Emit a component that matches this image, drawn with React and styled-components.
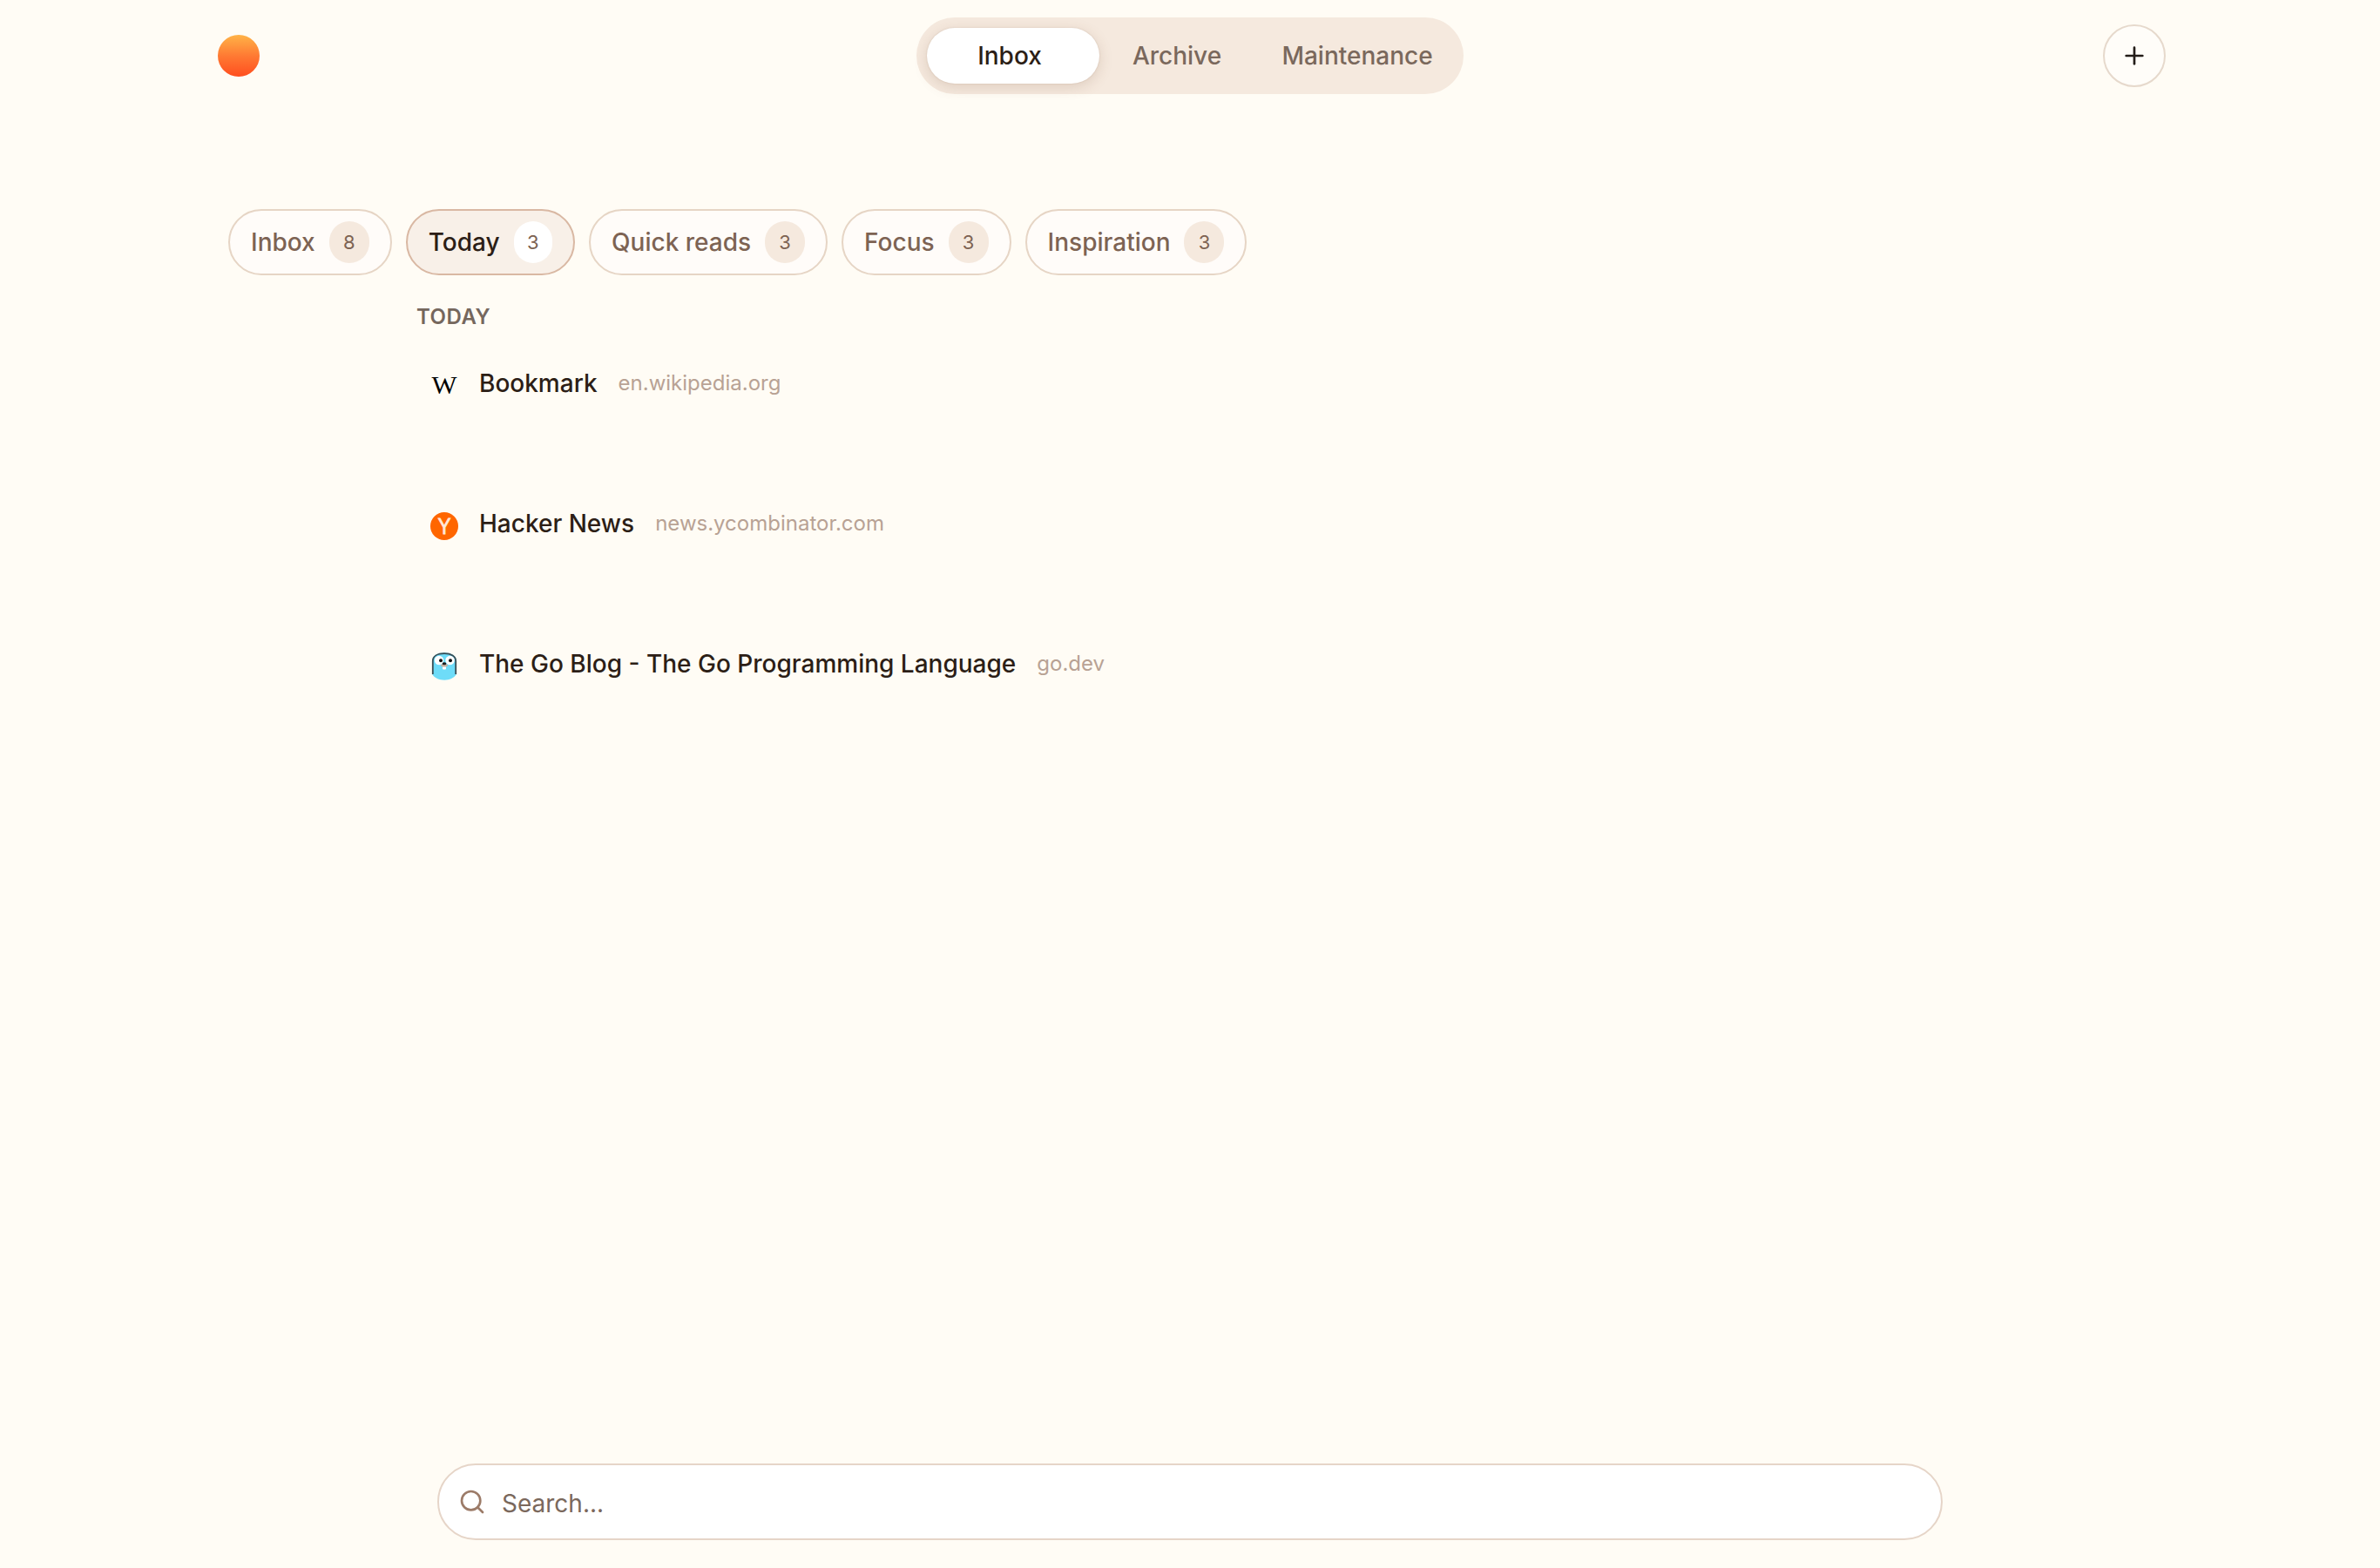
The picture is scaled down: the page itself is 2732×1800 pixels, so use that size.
import styled, { createGlobalStyle, css } from "styled-components";
import { Plus, Search } from "lucide-react";

const GlobalStyle = createGlobalStyle`
  * {
    box-sizing: border-box;
  }
  html,
  body {
    margin: 0;
    background: #fffcf5;
  }
  body,
  button,
  input {
    font-family: Inter, "Liberation Sans", sans-serif;
  }
`;

const Page = styled.div`
  min-height: 100vh;
  display: flex;
  flex-direction: column;
  color: #2c1e16;
`;

const Header = styled.header`
  height: 128px;
  padding: 0 246px;
  display: grid;
  grid-template-columns: 1fr auto 1fr;
  align-items: center;
`;

const Orb = styled.div`
  width: 48px;
  height: 48px;
  margin-left: 4px;
  border-radius: 50%;
  background: linear-gradient(180deg, #ffb347 0%, #ff7a33 50%, #ff4e1f 100%);
`;

const Tabs = styled.nav`
  height: 88px;
  padding: 12px;
  display: flex;
  border-radius: 44px;
  background: #f5e9de;
`;

const Tab = styled.button`
  height: 64px;
  width: ${({ $width }) => $width}px;
  padding: ${({ $padding }) => $padding || 0};
  border: 0;
  border-radius: 32px;
  background: transparent;
  color: #7a685c;
  font-size: 28px;
  font-weight: 500;
  ${({ $active }) =>
    $active &&
    css`
      background: #fff;
      color: #2c1e16;
      box-shadow: 0 4px 16px rgba(120, 80, 50, 0.18),
        0 0 2px rgba(120, 80, 50, 0.2);
    `}
`;

const AddButton = styled.button`
  width: 72px;
  height: 72px;
  padding: 0;
  display: flex;
  align-items: center;
  justify-content: center;
  justify-self: end;
  border: 2px solid #e6d9cc;
  border-radius: 50%;
  background: #fffdf9;
  color: #231c18;
`;

const Chips = styled.div`
  margin: 112px 0 0 262px;
  display: flex;
  gap: 16px;
`;

const Count = styled.span`
  min-width: 46px;
  height: 48px;
  display: flex;
  align-items: center;
  justify-content: center;
  border-radius: 24px;
  background: #f5e9de;
  color: #7d6353;
  font-size: 22px;
  font-weight: 400;
`;

const Chip = styled.button`
  height: 76px;
  padding: 0 24px;
  display: flex;
  align-items: center;
  gap: 16px;
  border: 2px solid #e6d5c5;
  border-radius: 38px;
  background: #fffcf9;
  color: #7d6353;
  font-size: 28px;
  font-weight: 500;
  ${({ $active }) =>
    $active &&
    css`
      border-color: #d9b8a3;
      background: #f8f0e8;
      color: #2c1e16;
      ${Count} {
        min-width: 44.5px;
        background: #fff;
      }
    `}
`;

const List = styled.main`
  flex: 1;
  padding: 32px 0 0 478px;
`;

const Heading = styled.h2`
  margin: 0;
  font-size: 24px;
  font-weight: 600;
  line-height: 32px;
  letter-spacing: 0.5px;
  text-transform: uppercase;
  color: #75675d;
`;

const Item = styled.article`
  height: 161px;
  padding: 40px 0 0 16px;
  display: flex;
  align-items: flex-start;
`;

const Favicon = styled.svg`
  width: 32px;
  height: 32px;
  margin: 7px 24px 0 0;
`;

const ItemTitle = styled.span`
  font-size: 28px;
  font-weight: 500;
  line-height: 40px;
`;

const Domain = styled.span`
  margin-left: 24px;
  font-size: 24px;
  line-height: 40px;
  color: #b8a294;
`;

const SearchBar = styled.label`
  width: 1728px;
  height: 88px;
  margin: 0 auto 32px;
  padding: 0 22px;
  display: flex;
  align-items: center;
  gap: 18px;
  border: 2px solid #e6d5c8;
  border-radius: 44px;
  background: #fff;
  color: #9c7b68;
`;

const SearchInput = styled.input`
  flex: 1;
  padding: 4px 0 0;
  border: 0;
  outline: 0;
  background: transparent;
  font-size: 28px;
  color: #2c1e16;
  &::placeholder {
    color: #7a685c;
    opacity: 1;
  }
`;

const WikipediaIcon = () => (
  <Favicon viewBox="0 0 32 32">
    <text
      x="16"
      y="25"
      textAnchor="middle"
      textLength="29"
      lengthAdjust="spacingAndGlyphs"
      fontFamily="Liberation Serif, serif"
      fontSize="29"
      fill="#000"
    >
      W
    </text>
  </Favicon>
);

const HackerNewsIcon = () => (
  <Favicon viewBox="0 0 32 32">
    <circle cx="16" cy="16" r="16" fill="#ff6600" />
    <text
      x="16"
      y="25"
      textAnchor="middle"
      textLength="15"
      lengthAdjust="spacingAndGlyphs"
      fontFamily="Liberation Sans, sans-serif"
      fontSize="26"
      fill="#ffe9da"
      stroke="#ffe9da"
      strokeWidth="0.9"
    >
      Y
    </text>
  </Favicon>
);

const GopherIcon = () => (
  <Favicon viewBox="0 0 32 32">
    <path
      d="M2 25V10C2 4 8 .3 16 .3S30 4 30 10v15c-3 4.500-8 6.700-14 6.700S5 29.500 2 25z"
      fill="#6edcf8"
    />
    <path
      d="M2.800 25V10C2.800 4.500 8 1.200 16 1.200S29.200 4.500 29.200 10v15"
      fill="none"
      stroke="#394d54"
      strokeWidth="1.800"
    />
    <circle cx="10" cy="9" r="5.200" fill="#fff" />
    <circle cx="22.500" cy="9" r="5.200" fill="#fff" />
    <circle cx="12" cy="9.200" r="2" fill="#111" />
    <circle cx="23" cy="9.200" r="2" fill="#111" />
    <rect x="14" y="15.500" width="4" height="4" rx="1" fill="#fff" />
    <ellipse cx="16" cy="14.800" rx="4" ry="1.800" fill="#c3b0a2" />
    <ellipse cx="16" cy="12.700" rx="2.300" ry="1.500" fill="#1c1c1c" />
  </Favicon>
);

const filters = [
  { label: "Inbox", count: 8 },
  { label: "Today", count: 3, active: true },
  { label: "Quick reads", count: 3 },
  { label: "Focus", count: 3 },
  { label: "Inspiration", count: 3 },
];

const items = [
  { title: "Bookmark", domain: "en.wikipedia.org", Icon: WikipediaIcon },
  { title: "Hacker News", domain: "news.ycombinator.com", Icon: HackerNewsIcon },
  {
    title: "The Go Blog - The Go Programming Language",
    domain: "go.dev",
    Icon: GopherIcon,
  },
];

const App = () => {
  return (
    <Page>
      <GlobalStyle />
      <Header>
        <Orb />
        <Tabs>
          <Tab $active $width={198} $padding="0 8px 0 0">
            Inbox
          </Tab>
          <Tab $width={178}>Archive</Tab>
          <Tab $width={228} $padding="0 0 0 8px">
            Maintenance
          </Tab>
        </Tabs>
        <AddButton aria-label="Add">
          <Plus size={32} strokeWidth={2} />
        </AddButton>
      </Header>

      <Chips>
        {filters.map(({ label, count, active }) => (
          <Chip key={label} $active={active}>
            {label}
            <Count>{count}</Count>
          </Chip>
        ))}
      </Chips>

      <List>
        <Heading>Today</Heading>
        {items.map(({ title, domain, Icon }) => (
          <Item key={title}>
            <Icon />
            <ItemTitle>{title}</ItemTitle>
            <Domain>{domain}</Domain>
          </Item>
        ))}
      </List>

      <SearchBar>
        <Search size={32} strokeWidth={2} />
        <SearchInput placeholder="Search..." />
      </SearchBar>
    </Page>
  );
};

export default App;
